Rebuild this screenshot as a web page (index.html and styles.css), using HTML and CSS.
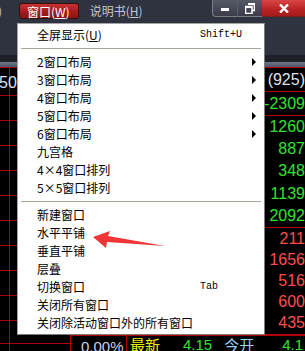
FILE: index.html
```html
<!DOCTYPE html>
<html>
<head>
<meta charset="utf-8">
<link rel="stylesheet" href="styles.css">
</head>
<body>
<div class="app">
  <div class="titlebar">
    <div class="menubar">
      <span class="mb-item mb-cut">)</span>
      <span class="mb-item mb-active">窗口(<u>W</u>)</span>
      <span class="mb-item">说明书(<u>H</u>)</span>
    </div>
    <div class="winbtns">
      <div class="wbtn wbtn-min"><span class="min-bar"></span></div>
      <div class="wbtn wbtn-max">
        <svg width="10" height="11" viewBox="0 0 10 11"><path d="M3 0.5h6.5v7h-2.5M0.5 3.5h6.5v7h-6.5z" fill="none" stroke="#fff" stroke-width="1.6"/><rect x="0.5" y="3" width="6.5" height="2" fill="#fff"/><rect x="3" y="0" width="6.5" height="2" fill="#fff"/></svg>
      </div>
      <div class="wbtn wbtn-close">
        <svg width="10" height="9" viewBox="0 0 10 9"><path d="M1 0.5L9 8.5M9 0.5L1 8.5" stroke="#fff" stroke-width="2.4"/></svg>
      </div>
    </div>
  </div>
  <div class="strip-dark"></div>
  <div class="strip-light"></div>

  <div class="content">
    <div class="left-pane">
      <div class="lrow lrow-first"><span class="num-white">506</span></div>
      <div class="lrow"></div>
      <div class="lrow"></div>
      <div class="lrow"></div>
      <div class="lrow"></div>
      <div class="lrow"></div>
      <div class="lrow"></div>
      <div class="lrow"></div>
      <div class="lrow"></div>
      <div class="lrow"></div>
      <div class="lrow lrow-pre"></div>
      <div class="lrow lrow-last"></div>
    </div>

    <div class="main-pane">
      <div class="data-area">
        <div class="right-pane">
          <div class="rgroup rg-single"><span class="num-white">(925)</span></div>
          <div class="rgroup rg-single"><span class="num-green">-2309</span></div>
          <div class="rgroup rg-five">
            <span class="num-green">1260</span>
            <span class="num-green">887</span>
            <span class="num-green">348</span>
            <span class="num-green">1139</span>
            <span class="num-green">2092</span>
          </div>
          <div class="rgroup rg-five2">
            <span class="num-red">211</span>
            <span class="num-red">1656</span>
            <span class="num-red">516</span>
            <span class="num-red">600</span>
            <span class="num-red">435</span>
          </div>
        </div>
      </div>
      <div class="bottom-row">
        <div class="bcell-b"><span class="num-pale">0.00%</span></div>
        <div class="bcell-c">
          <span class="lbl-yellow">最新</span>
          <span class="num-green">4.15</span>
          <span class="lbl-blue">今开</span>
          <span class="num-green">4.1</span>
        </div>
      </div>
    </div>
  </div>

  <div class="menu">
    <div class="mi"><span class="mi-label">全屏显示(<u>U</u>)</span><span class="mi-key">Shift+U</span></div>
    <div class="msep"></div>
    <div class="mi"><span class="mi-label">2窗口布局</span><span class="mi-sub"></span></div>
    <div class="mi"><span class="mi-label">3窗口布局</span><span class="mi-sub"></span></div>
    <div class="mi"><span class="mi-label">4窗口布局</span><span class="mi-sub"></span></div>
    <div class="mi"><span class="mi-label">5窗口布局</span><span class="mi-sub"></span></div>
    <div class="mi"><span class="mi-label">6窗口布局</span><span class="mi-sub"></span></div>
    <div class="mi"><span class="mi-label">九宫格</span></div>
    <div class="mi"><span class="mi-label">4×4窗口排列</span></div>
    <div class="mi"><span class="mi-label">5×5窗口排列</span></div>
    <div class="msep"></div>
    <div class="mi"><span class="mi-label">新建窗口</span></div>
    <div class="mi"><span class="mi-label">水平平铺</span></div>
    <div class="mi"><span class="mi-label">垂直平铺</span></div>
    <div class="mi"><span class="mi-label">层叠</span></div>
    <div class="mi"><span class="mi-label">切换窗口</span><span class="mi-key">Tab</span></div>
    <div class="mi"><span class="mi-label">关闭所有窗口</span></div>
    <div class="mi"><span class="mi-label">关闭除活动窗口外的所有窗口</span></div>
  </div>

  <svg class="pointer" width="305" height="351" viewBox="0 0 305 351">
    <polygon points="93,237 110,231 108,236 165,246 107,242 106,248" fill="#ef3535"/>
  </svg>
</div>
</body>
</html>
```

FILE: styles.css
```css
* { box-sizing: border-box; }
html, body { margin: 0; padding: 0; background: #000; }
.app {
  position: relative;
  width: 305px;
  height: 351px;
  overflow: hidden;
  background: #000;
  font-family: "Noto Sans CJK SC", "Liberation Sans", sans-serif;
}

/* title + menubar */
.titlebar {
  height: 55px;
  background: #2f323f;
  display: flex;
  justify-content: space-between;
  align-items: flex-start;
}
.menubar {
  display: flex;
  align-items: center;
  padding-top: 3px;
  height: 19px;
  font-size: 12px;
  line-height: 14px;
}
.mb-item { color: #c3c6d2; white-space: nowrap; }
.mb-item u { text-decoration: underline; text-underline-offset: 1px; }
.mb-cut { margin-left: -2px; width: 21px; }
.mb-active {
  color: #fff;
  height: 16px;
  padding: 1px 8px 0 7px;
  border: 1px solid #3a0c0c;
  border-radius: 3px;
  background: linear-gradient(#c93434, #a31c1c 55%, #8c1414);
  margin-right: 11px;
}
.winbtns { display: flex; height: 17px; }
.wbtn {
  height: 17px;
  display: flex;
  align-items: center;
  justify-content: center;
}
.wbtn-min {
  width: 26px;
  border: 1px solid #7a7e88;
  border-top: none;
  border-right-color: #5a5e68;
  border-radius: 0 0 0 4px;
  background: linear-gradient(#555966, #3a3d48);
}
.min-bar { width: 8px; height: 3px; background: #fff; margin-top: 3px; }
.wbtn-max {
  width: 24px;
  border-bottom: 1px solid #7a7e88;
  background: linear-gradient(#555966, #3a3d48);
}
.wbtn-close {
  width: 43px;
  background: linear-gradient(#d94545, #b72222 60%, #a41a1a);
  border-bottom: 1px solid #7a2020;
}

.strip-dark { height: 7px; background: #1e2027; }
.strip-light { height: 5px; background: linear-gradient(#6f778a, #4d5466); }

/* data area */
.content {
  display: flex;
  height: 284px;
}
.left-pane {
  width: 70px;
  flex: none;
  background: linear-gradient(#b30000, #b30000) 9px 0 / 1px 100% no-repeat;
}
.lrow {
  height: 25px;
  border-top: 1px solid #b30000;
}
.lrow-first {
  height: 28px;
  padding-top: 1px;
}
.lrow-first .num-white { margin-left: -1px; }
.lrow-pre { height: 23px; }
.lrow-last { height: 8px; }

.main-pane {
  flex: 1;
  display: flex;
  flex-direction: column;
}
.data-area {
  height: 268px;
  display: flex;
  justify-content: flex-end;
  border-top: 1px solid #b30000;
}
.right-pane {
  width: 40px;
  display: flex;
  flex-direction: column;
}
.rgroup {
  display: flex;
  flex-direction: column;
  align-items: flex-end;
  border-bottom: 1px solid #b30000;
}
.rgroup span { display: flex; align-items: center; justify-content: flex-end; white-space: nowrap; }
.rg-single { height: 24px; justify-content: center; }
.rg-five { height: 112px; }
.rg-five span { height: 22.2px; }
.rg-five2 { height: 107px; }
.rg-five2 span { height: 21.2px; }

.num-white, .num-green, .num-red, .num-pale {
  font-family: "Liberation Sans", Arial, sans-serif;
  font-size: 16px;
  line-height: 16px;
}
.num-white { color: #dfe2f0; }
.num-green { color: #34e034; }
.num-red { color: #ff4e4e; }
.num-pale { color: #c8d0ee; font-size: 15px; }

.bottom-row {
  display: flex;
  height: 16px;
  border-top: 1px solid #b30000;
}
.bcell-b {
  width: 57px;
  border-left: 1px solid #b30000;
  border-right: 1px solid #b30000;
  padding: 1px 0 0 10px;
  line-height: 16px;
}
.bcell-c {
  flex: 1;
  display: flex;
  align-items: flex-start;
  padding: 1px 0 0 3px;
  white-space: nowrap;
}
.bcell-c .num-green { font-size: 15px; }
.bcell-c .num-green:nth-child(2) { margin-left: 23px; }
.bcell-c .num-green:nth-child(4) { margin-left: 28px; }
.lbl-yellow { color: #f0f000; font-size: 15px; line-height: 16px; }
.lbl-blue { color: #9ad0f0; font-size: 15px; line-height: 16px; margin-left: 12px; }

/* dropdown menu */
.menu {
  position: absolute;
  left: 17px;
  top: 23px;
  width: 248px;
  background: #fff;
  border: 1px solid #a4a4a4;
  border-right-color: #7c7c7c;
  border-bottom-color: #7c7c7c;
  padding: 2px 0;
  font-size: 12px;
  color: #000;
}
.mi {
  height: 18px;
  display: flex;
  align-items: center;
  padding-left: 19px;
  padding-right: 8px;
  line-height: 18px;
}
.mi-label { width: 163px; white-space: nowrap; }
.mi-label u { text-underline-offset: 1px; }
.mi-key {
  font-family: "Liberation Mono", "DejaVu Sans Mono", monospace;
  font-size: 10px;
  letter-spacing: 0;
}
.mi-sub {
  margin-left: auto;
  width: 0;
  height: 0;
  border-top: 4px solid transparent;
  border-bottom: 4px solid transparent;
  border-left: 4px solid #000;
}
.msep {
  height: 9px;
  display: flex;
  flex-direction: column;
  justify-content: center;
  padding: 0 3px;
}
.msep::before {
  content: "";
  display: block;
  height: 1px;
  background: #a6a69a;
  box-shadow: 0 1px 0 #fff;
}

.pointer {
  position: absolute;
  left: 0;
  top: 0;
  pointer-events: none;
}
```
